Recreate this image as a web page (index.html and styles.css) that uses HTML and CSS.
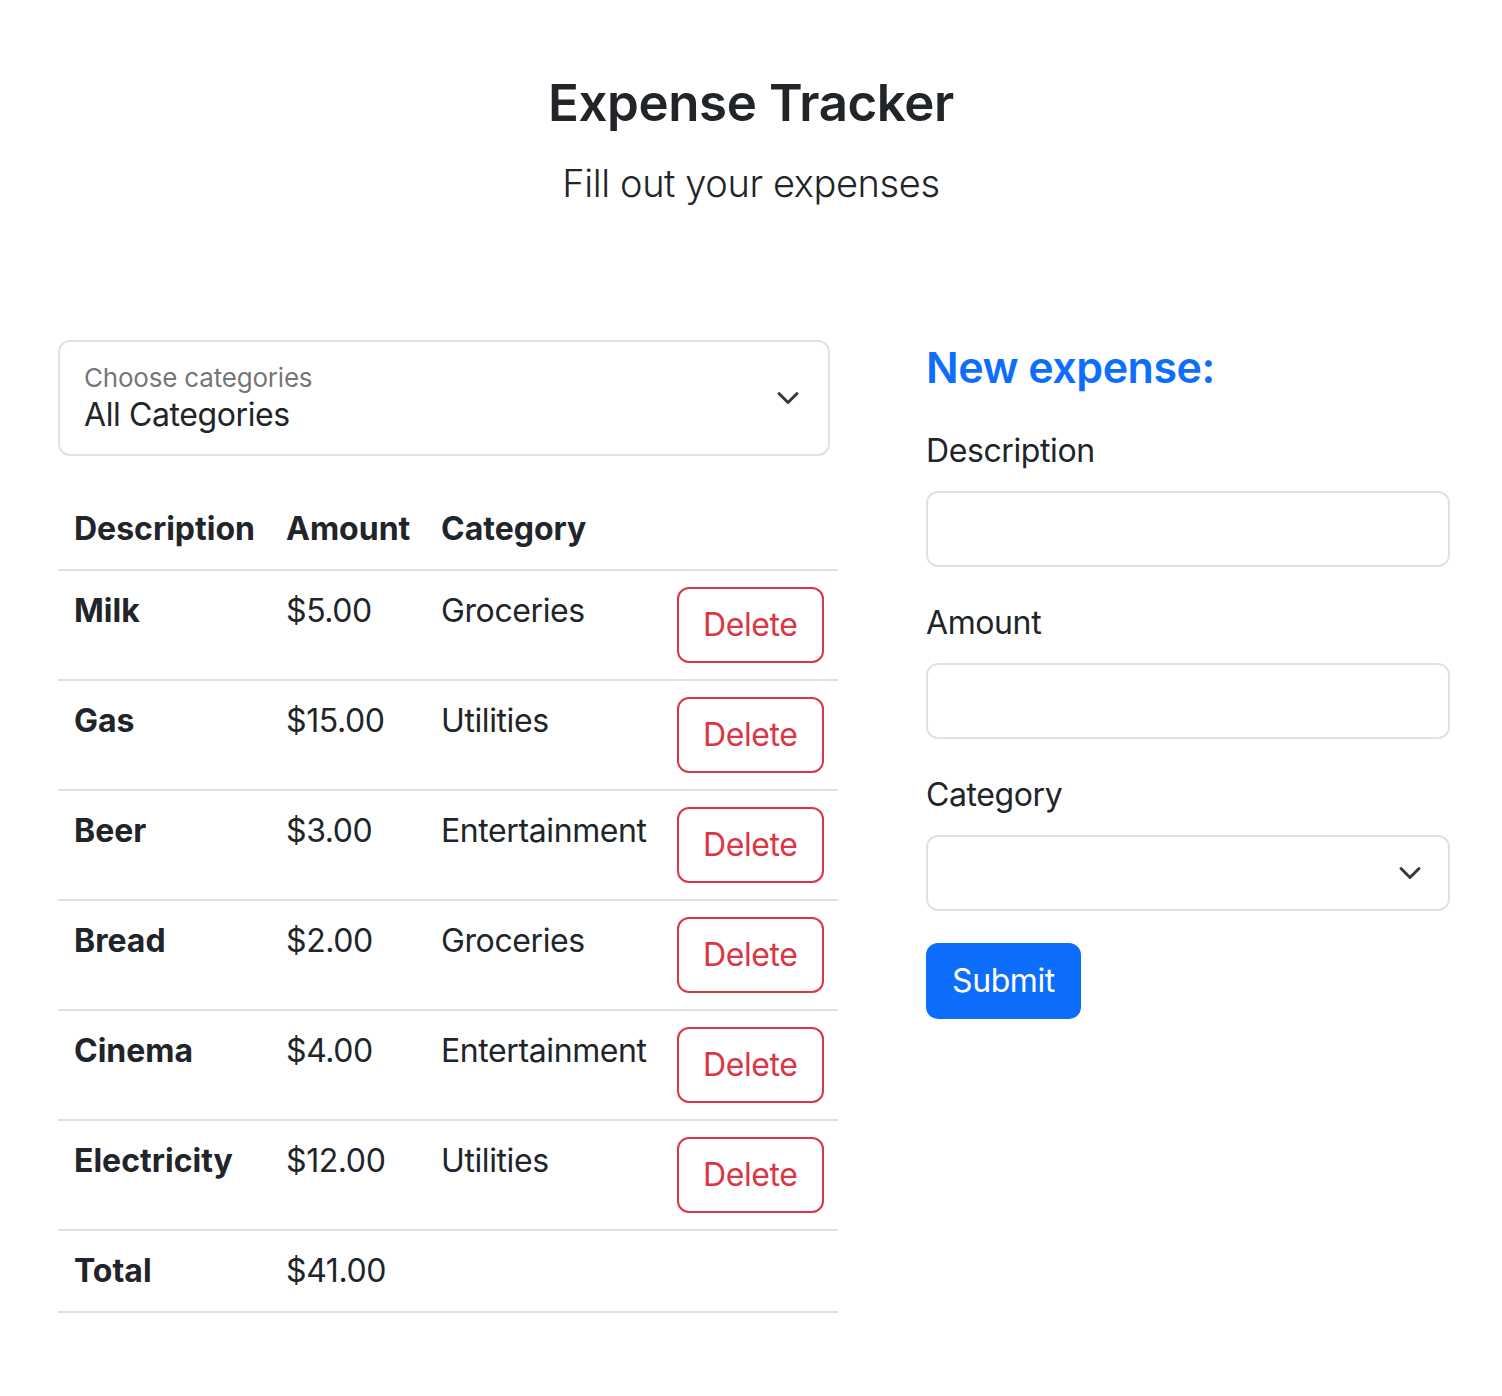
FILE: index.html
```html
<!DOCTYPE html>
<html lang="en">
<head>
<meta charset="utf-8">
<title>Expense Tracker</title>
<link rel="stylesheet" href="styles.css">
</head>
<body>
<header class="page-header">
  <h1 class="title">Expense Tracker</h1>
  <p class="lead">Fill out your expenses</p>
</header>
<main class="layout">
  <section class="list-col">
    <div class="float-select">
      <div class="float-text">
        <span class="float-label">Choose categories</span>
        <span class="float-value">All Categories</span>
      </div>
      <svg class="chevron" width="24" height="24" viewBox="0 0 16 16"><path d="M2 5l6 6 6-6" fill="none" stroke="#343a40" stroke-width="2" stroke-linecap="round" stroke-linejoin="round"/></svg>
    </div>
    <table class="expenses">
      <colgroup>
        <col class="c-desc"><col class="c-amt"><col class="c-cat"><col class="c-act">
      </colgroup>
      <thead>
        <tr><th>Description</th><th>Amount</th><th>Category</th><th></th></tr>
      </thead>
      <tbody>
        <tr><th>Milk</th><td>$5.00</td><td>Groceries</td><td><button class="btn-delete">Delete</button></td></tr>
        <tr><th>Gas</th><td>$15.00</td><td>Utilities</td><td><button class="btn-delete">Delete</button></td></tr>
        <tr><th>Beer</th><td>$3.00</td><td>Entertainment</td><td><button class="btn-delete">Delete</button></td></tr>
        <tr><th>Bread</th><td>$2.00</td><td>Groceries</td><td><button class="btn-delete">Delete</button></td></tr>
        <tr><th>Cinema</th><td>$4.00</td><td>Entertainment</td><td><button class="btn-delete">Delete</button></td></tr>
        <tr><th>Electricity</th><td>$12.00</td><td>Utilities</td><td><button class="btn-delete">Delete</button></td></tr>
      </tbody>
      <tfoot>
        <tr class="total-row"><th>Total</th><td>$41.00</td><td></td><td></td></tr>
      </tfoot>
    </table>
  </section>
  <section class="form-col">
    <h3 class="form-title">New expense:</h3>
    <div class="field">
      <label class="field-label">Description</label>
      <div class="input-box"></div>
    </div>
    <div class="field">
      <label class="field-label">Amount</label>
      <div class="input-box"></div>
    </div>
    <div class="field">
      <label class="field-label">Category</label>
      <div class="input-box select-box">
        <svg class="chevron" width="24" height="24" viewBox="0 0 16 16"><path d="M2 5l6 6 6-6" fill="none" stroke="#343a40" stroke-width="2" stroke-linecap="round" stroke-linejoin="round"/></svg>
      </div>
    </div>
    <button class="btn-submit">Submit</button>
  </section>
</main>
</body>
</html>
```

FILE: styles.css
```css
* { box-sizing: border-box; }
body {
  margin: 0;
  background: #fff;
  color: #212529;
  font-family: Inter, "Noto Sans", "Liberation Sans", sans-serif;
  font-size: 32px;
  line-height: 48px;
  letter-spacing: -0.4px;
}
.page-header {
  text-align: center;
  padding-top: 72px;
}
.title {
  margin: 0;
  font-size: 51px;
  font-weight: 600;
  line-height: 61px;
  letter-spacing: -0.4px;
}
.lead {
  margin: 22px 0 0;
  font-size: 38px;
  font-weight: 300;
  line-height: 57px;
  letter-spacing: -0.4px;
}
.layout {
  display: grid;
  grid-template-columns: 780px 524px;
  column-gap: 88px;
  padding-left: 58px;
  margin-top: 128px;
  align-items: start;
}
.float-select {
  width: 772px;
  height: 116px;
  border: 2px solid #dee2e6;
  border-radius: 12px;
  display: flex;
  align-items: center;
  justify-content: space-between;
  padding: 0 28px 0 24px;
}
.float-text {
  display: flex;
  flex-direction: column;
  padding-top: 1px;
}
.float-label {
  font-size: 26px;
  line-height: 32px;
  letter-spacing: -0.2px;
  color: rgba(33, 37, 41, 0.65);
}
.float-value {
  font-size: 32px;
  line-height: 40px;
  margin-top: 1px;
}
.chevron { display: block; flex: none; }
.expenses {
  margin-top: 33px;
  width: 780px;
  border-collapse: collapse;
  table-layout: fixed;
}
.c-desc { width: 212px; }
.c-amt { width: 155px; }
.c-cat { width: 236px; }
.c-act { width: 177px; }
.expenses th, .expenses td {
  padding: 16px;
  text-align: left;
  vertical-align: top;
  border-bottom: 2px solid #dee2e6;
  white-space: nowrap;
}
.expenses th { font-weight: 700; letter-spacing: 0; }
.expenses td { font-weight: 400; }
.btn-delete {
  font: inherit;
  letter-spacing: inherit;
  color: #dc3545;
  background: #fff;
  border: 2px solid #dc3545;
  border-radius: 12px;
  padding: 12px 24px;
  line-height: 48px;
  margin: 0;
  display: block;
}
.form-title {
  margin: 0 0 38px;
  padding-top: 6px;
  font-size: 43px;
  font-weight: 600;
  line-height: 43px;
  letter-spacing: -0.5px;
  color: #0d6efd;
}
.field { margin-bottom: 32px; }
.field-label {
  display: block;
  margin-bottom: 16px;
}
.input-box {
  height: 76px;
  border: 2px solid #dee2e6;
  border-radius: 12px;
  background: #fff;
}
.select-box {
  display: flex;
  align-items: center;
  justify-content: flex-end;
  padding-right: 26px;
}
.btn-submit {
  font: inherit;
  letter-spacing: inherit;
  color: #fff;
  background: #0d6efd;
  border: 2px solid #0d6efd;
  border-radius: 12px;
  padding: 12px 24px;
  line-height: 48px;
  margin: 0;
}
```
